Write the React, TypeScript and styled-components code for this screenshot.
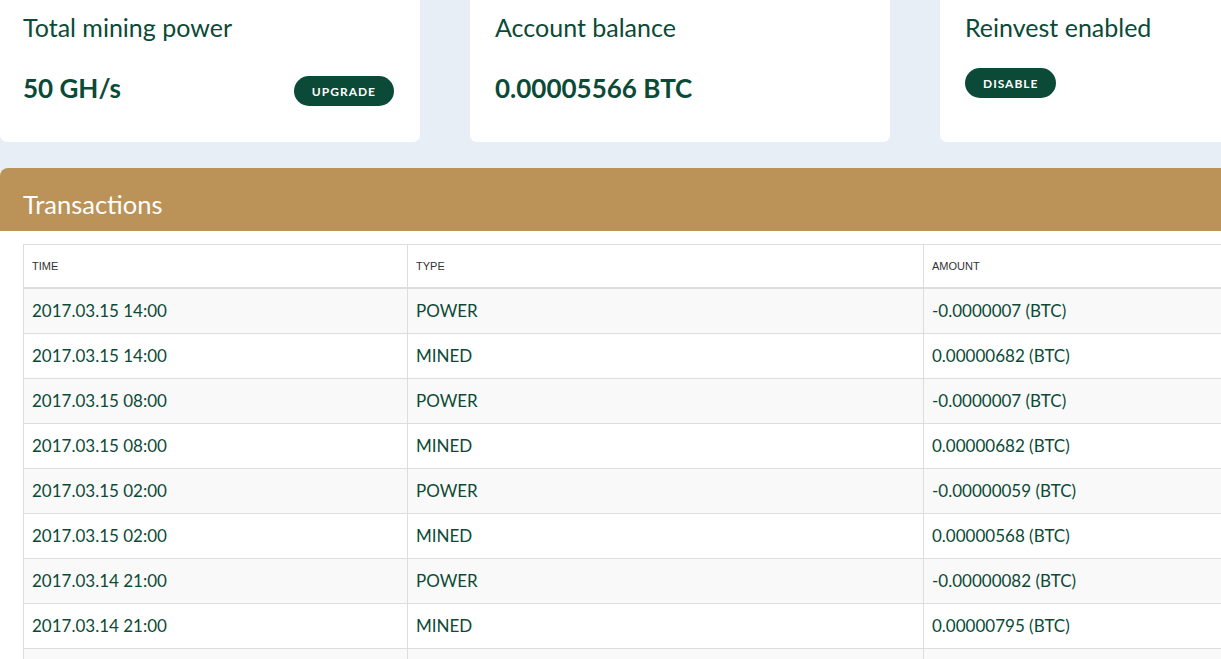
import React from 'react';
import styled, { createGlobalStyle } from 'styled-components';

const GlobalStyle = createGlobalStyle`
  html, body {
    margin: 0;
    padding: 0;
    background: #e8eef5;
    overflow: hidden;
  }
  body {
    font-family: Lato, "Open Sans", Arial, sans-serif;
    color: #0b4a36;
  }
`;

const Page = styled.div`
  width: 1420px;
  display: flex;
  flex-direction: column;
  gap: 26px;
`;

const CardRow = styled.div`
  display: grid;
  grid-template-columns: repeat(3, 420px);
  gap: 50px;
`;

const Card = styled.div`
  background: #ffffff;
  border-radius: 0 0 7px 7px;
  height: 142px;
  box-sizing: border-box;
  padding: 12px 25px 0 25px;

  &:first-child {
    padding-left: 23px;
  }
`;

const CardTitle = styled.div`
  font-size: 25px;
  line-height: 1.2;
  font-weight: 400;
  color: #0b4a36;
`;

const ValueRow = styled.div`
  margin-top: 31px;
  display: flex;
  align-items: flex-start;
  justify-content: space-between;
  padding-right: 1px;
`;

const Value = styled.div`
  font-size: 26px;
  line-height: 1.2;
  font-weight: 700;
  color: #0b4a36;
`;

const PillButton = styled.button<{ $top?: number }>`
  margin-top: ${({ $top }) => $top ?? 0}px;
  height: 30px;
  padding: 0 18px;
  border: none;
  border-radius: 15px;
  background: #0b4a36;
  color: #ffffff;
  font-family: Lato, Arial, sans-serif;
  font-size: 12px;
  font-weight: 700;
  letter-spacing: 1px;
  cursor: pointer;
`;

const Panel = styled.section`
  background: #ffffff;
  border-radius: 8px 0 0 0;
  overflow: hidden;
`;

const PanelHeader = styled.div`
  background: #bb9257;
  height: 63px;
  box-sizing: border-box;
  padding: 21px 23px 0;
  color: #ffffff;
  font-size: 25.5px;
  line-height: 1.2;
`;

const PanelBody = styled.div`
  padding: 13px 24px 0 23px;
`;

const Table = styled.table`
  width: 100%;
  border-collapse: collapse;
  table-layout: fixed;
`;

const Th = styled.th<{ $w?: number }>`
  width: ${({ $w }) => ($w ? `${$w}px` : 'auto')};
  text-align: left;
  font-family: "Liberation Sans", Arial, sans-serif;
  font-size: 11px;
  font-weight: 400;
  color: #333333;
  text-transform: uppercase;
  padding: 10px 8px;
  line-height: 22px;
  border: 1px solid #dddddd;
  border-bottom: 2px solid #dddddd;
`;

const Tr = styled.tr`
  &:nth-child(odd) {
    background: #f9f9f9;
  }
`;

const Td = styled.td`
  padding: 11px 8px;
  line-height: 22px;
  font-size: 17px;
  color: #0b4a36;
  border: 1px solid #dddddd;
  white-space: nowrap;
`;

const rows = [
  ['2017.03.15 14:00', 'POWER', '-0.0000007 (BTC)'],
  ['2017.03.15 14:00', 'MINED', '0.00000682 (BTC)'],
  ['2017.03.15 08:00', 'POWER', '-0.0000007 (BTC)'],
  ['2017.03.15 08:00', 'MINED', '0.00000682 (BTC)'],
  ['2017.03.15 02:00', 'POWER', '-0.00000059 (BTC)'],
  ['2017.03.15 02:00', 'MINED', '0.00000568 (BTC)'],
  ['2017.03.14 21:00', 'POWER', '-0.00000082 (BTC)'],
  ['2017.03.14 21:00', 'MINED', '0.00000795 (BTC)'],
  ['2017.03.14 15:00', 'POWER', '-0.00000082 (BTC)'],
];

export default function App() {
  return (
    <>
      <GlobalStyle />
      <Page>
        <CardRow>
          <Card>
            <CardTitle>Total mining power</CardTitle>
            <ValueRow>
              <Value>50 GH/s</Value>
              <PillButton $top={3}>UPGRADE</PillButton>
            </ValueRow>
          </Card>
          <Card>
            <CardTitle>Account balance</CardTitle>
            <ValueRow>
              <Value>0.00005566 BTC</Value>
            </ValueRow>
          </Card>
          <Card>
            <CardTitle>Reinvest enabled</CardTitle>
            <PillButton $top={26}>DISABLE</PillButton>
          </Card>
        </CardRow>
        <Panel>
          <PanelHeader>Transactions</PanelHeader>
          <PanelBody>
            <Table>
              <thead>
                <tr>
                  <Th $w={367}>Time</Th>
                  <Th $w={499}>Type</Th>
                  <Th>Amount</Th>
                </tr>
              </thead>
              <tbody>
                {rows.map((r, i) => (
                  <Tr key={i}>
                    <Td>{r[0]}</Td>
                    <Td>{r[1]}</Td>
                    <Td>{r[2]}</Td>
                  </Tr>
                ))}
              </tbody>
            </Table>
          </PanelBody>
        </Panel>
      </Page>
    </>
  );
}
